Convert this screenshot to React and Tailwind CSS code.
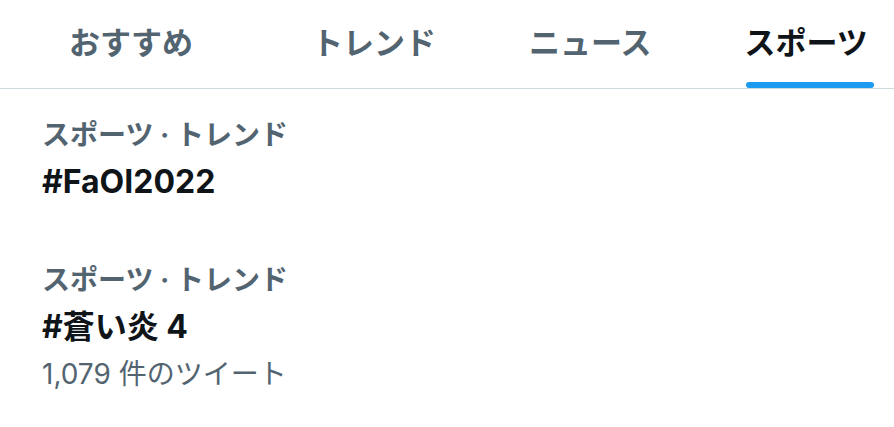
import React from 'react'

const font = { fontFamily: 'Inter, "Noto Sans CJK JP", sans-serif' }

const tabs = [
  { label: 'おすすめ', offset: 'ml-[69px]' },
  { label: 'トレンド', offset: 'ml-[119px]' },
  { label: 'ニュース', offset: 'ml-[93px]' },
  { label: 'スポーツ', offset: 'ml-[93px]', active: true },
]

const trends = [
  { category: 'スポーツ · トレンド', tag: '#FaOI2022' },
  { category: 'スポーツ · トレンド', tag: '#蒼い炎 4', count: '1,079 件のツイート' },
]

const App = () => {
  return (
    <div className="w-[894px] h-[427px] bg-white overflow-hidden" style={font}>
      {/* Tabs */}
      <div className="flex h-[89px] border-b border-[#cfd9de]">
        {tabs.map((tab) => (
          <div key={tab.label} className={`relative flex h-full ${tab.offset}`}>
            <span
              className={`pt-[23px] text-[31px] leading-[40px] font-bold ${
                tab.active ? 'text-[#0f1419]' : 'text-[#536471]'
              }`}
            >
              {tab.label}
            </span>
            {tab.active && (
              <div className="absolute left-[2px] bottom-0 h-[6px] w-[128px] rounded-full bg-[#1d9bf0]" />
            )}
          </div>
        ))}
      </div>

      {/* Trends */}
      <div className="flex flex-col">
        {trends.map((t, i) => (
          <div key={i} className="flex flex-col px-[42px] pt-[28px] pb-[30px]">
            <div className="text-[28px] leading-[36px] font-bold text-[#536471]">{t.category}</div>
            <div className="mt-[7px] text-[32px] leading-[44px] font-bold text-[#0f1419]">{t.tag}</div>
            {t.count && (
              <div className="mt-[7px] text-[28px] leading-[36px] text-[#536471]">{t.count}</div>
            )}
          </div>
        ))}
      </div>
    </div>
  )
}

export default App
